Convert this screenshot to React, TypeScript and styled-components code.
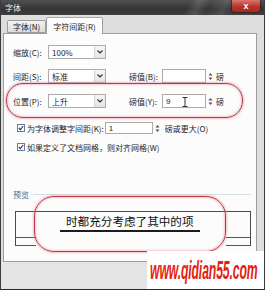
import React from "react";
import styled, { createGlobalStyle } from "styled-components";

const GlobalStyle = createGlobalStyle`
  html, body {
    margin: 0;
    padding: 0;
    background: #ffffff;
  }
`;

const CJK = `"Noto Sans CJK SC", "Noto Sans", sans-serif`;

function App() {
  return (
    <>
      <GlobalStyle />
      <Dialog.Window>
        <Dialog.TitleBar>
          <Dialog.Title>字体</Dialog.Title>
          <Dialog.Close>x</Dialog.Close>
        </Dialog.TitleBar>

        <Dialog.Frame>
          <Tabs.Strip>
            <Tabs.Tab>字体(N)</Tabs.Tab>
            <Tabs.Tab active>字符间距(R)</Tabs.Tab>
          </Tabs.Strip>

          <Dialog.Panel>
            <Form.Row>
              <Form.Label>缩放(C):</Form.Label>
              <Combo.Box>
                <Combo.Value>100%</Combo.Value>
                <Combo.Arrow>
                  <Chevron />
                </Combo.Arrow>
              </Combo.Box>
            </Form.Row>

            <Form.Row gap={10}>
              <Form.Label>间距(S):</Form.Label>
              <Combo.Box>
                <Combo.Value>标准</Combo.Value>
                <Combo.Arrow>
                  <Chevron />
                </Combo.Arrow>
              </Combo.Box>
              <Form.Label2>磅值(B):</Form.Label2>
              <Spin.Input width={44} />
              <Spin.Arrows>
                <SpinGlyph />
              </Spin.Arrows>
              <Form.Unit>磅</Form.Unit>
            </Form.Row>

            <Form.Row gap={11}>
              <Form.Label>位置(P):</Form.Label>
              <Combo.Box>
                <Combo.Value>上升</Combo.Value>
                <Combo.Arrow>
                  <Chevron />
                </Combo.Arrow>
              </Combo.Box>
              <Form.Label2>磅值(Y):</Form.Label2>
              <Spin.Input width={44}>
                9
                <Spin.Cursor>
                  <svg width="6" height="10" viewBox="0 0 6 10">
                    <path
                      d="M0.5 0.5h2.5M3 0.5h2.5M3 0.5v9M0.5 9.5h2.5M3 9.5h2.5"
                      stroke="#333"
                      strokeWidth="1"
                      fill="none"
                    />
                  </svg>
                </Spin.Cursor>
              </Spin.Input>
              <Spin.Arrows>
                <SpinGlyph />
              </Spin.Arrows>
              <Form.Unit>磅</Form.Unit>
            </Form.Row>

            <Form.CheckRow gap={14}>
              <Check.Box>
                <CheckMark />
              </Check.Box>
              <Check.Text>为字体调整字间距(K):</Check.Text>
              <Spin.Input width={48} small>
                1
              </Spin.Input>
              <Spin.Arrows>
                <SpinGlyph />
              </Spin.Arrows>
              <Form.Unit wide>磅或更大(O)</Form.Unit>
            </Form.CheckRow>

            <Form.CheckRow gap={7}>
              <Check.Box>
                <CheckMark />
              </Check.Box>
              <Check.Text>如果定义了文档网格，则对齐网格(W)</Check.Text>
            </Form.CheckRow>

            <Preview.Legend>
              <span>预览</span>
              <Preview.Rule />
            </Preview.Legend>

            <Preview.Box>
              <Preview.Text>时都充分考虑了其中的项</Preview.Text>
              <Preview.Line />
              <Preview.Line bottom />
            </Preview.Box>
          </Dialog.Panel>
        </Dialog.Frame>

        <Dialog.Footer />

        <Mark.Ring
          style={{ left: 5, top: 83, width: 237, height: 35, borderRadius: 17 }}
        />
        <Mark.Ring
          style={{ left: 33, top: 196, width: 192, height: 56, borderRadius: 20 }}
        />

        <Watermark.Box>
          <Watermark.Text>www.qidian55.com</Watermark.Text>
        </Watermark.Box>
      </Dialog.Window>
    </>
  );
}

function Chevron() {
  return (
    <svg width="6" height="4" viewBox="0 0 6 4">
      <path d="M0.5 0.5L3 3L5.5 0.5" stroke="#333" strokeWidth="1.2" fill="none" />
    </svg>
  );
}

function SpinGlyph() {
  return (
    <svg width="5" height="9" viewBox="0 0 5 9">
      <path d="M0.5 3.5L2.5 1L4.5 3.5Z M0.5 5.5L2.5 8L4.5 5.5Z" fill="#555" />
    </svg>
  );
}

function CheckMark() {
  return (
    <svg width="6" height="6" viewBox="0 0 6 6">
      <path d="M0.8 3L2.4 4.6L5.2 1" stroke="#2a3c5a" strokeWidth="1.1" fill="none" />
    </svg>
  );
}

const Dialog = {
  Window: styled.div`
    position: relative;
    width: 265px;
    height: 290px;
    box-sizing: border-box;
    display: flex;
    flex-direction: column;
    overflow: hidden;
    background: #e2e2e2;
    border-left: 1px solid #3c3c3c;
    border-right: 1px solid #3c3c3c;
    border-bottom: 1px solid #2a2a2a;
    font-family: ${CJK};
    font-size: 8px;
    color: #1e1e1e;
  `,
  TitleBar: styled.div`
    position: relative;
    height: 15px;
    flex: none;
    display: flex;
    align-items: center;
    padding-left: 4px;
    background:
      linear-gradient(115deg, transparent 70%, rgba(255, 255, 255, 0.12) 74%, transparent 78%, rgba(255, 255, 255, 0.1) 84%, transparent 88%),
      linear-gradient(to bottom, #505050, #343434 60%, #3e3e3e);
  `,
  Title: styled.span`
    color: #ececec;
    font-size: 8px;
    line-height: 1;
  `,
  Close: styled.div`
    position: absolute;
    top: 0;
    right: 4px;
    width: 28px;
    height: 12px;
    display: flex;
    align-items: center;
    justify-content: center;
    border-radius: 0 0 3px 3px;
    background: linear-gradient(to bottom, #d9766a, #b8332a 55%, #a52a22);
    box-shadow: 0 0 0 1px rgba(60, 20, 20, 0.6);
    color: #ffffff;
    font-family: "Liberation Sans", sans-serif;
    font-weight: bold;
    font-size: 9px;
    line-height: 1;
  `,
  Frame: styled.div`
    flex: none;
    padding: 2px 7px 0 2px;
    background: #dedede;
  `,
  Panel: styled.div`
    position: relative;
    height: 229px;
    box-sizing: border-box;
    padding: 11px 0 0 9px;
    border: 1px solid #9c9c9c;
    background: #fcfcfc;
  `,
  Footer: styled.div`
    flex: 1;
    background: #e4e4e4;
  `,
};

const Tabs = {
  Strip: styled.div`
    height: 16px;
    display: flex;
    align-items: flex-end;
    padding-left: 4px;
  `,
  Tab: styled.div<{ active?: boolean }>`
    position: relative;
    z-index: ${(p) => (p.active ? 2 : 1)};
    box-sizing: border-box;
    height: ${(p) => (p.active ? 17 : 13)}px;
    margin-bottom: ${(p) => (p.active ? -1 : 0)}px;
    padding: 0 ${(p) => (p.active ? 6 : 5)}px;
    display: flex;
    align-items: center;
    border: 1px solid #9c9c9c;
    border-bottom: ${(p) => (p.active ? "none" : "1px solid #9c9c9c")};
    border-top-color: ${(p) => (p.active ? "#e0a050" : "#9c9c9c")};
    border-radius: 2px 2px 0 0;
    background: ${(p) =>
      p.active ? "#fcfcfc" : "linear-gradient(to bottom, #f2f2f2, #dcdcdc)"};
    font-size: 8px;
    white-space: nowrap;
  `,
};

const Form = {
  Row: styled.div<{ gap?: number }>`
    height: 14px;
    margin-top: ${(p) => p.gap ?? 0}px;
    display: flex;
    align-items: center;
  `,
  CheckRow: styled.div<{ gap?: number }>`
    height: 12px;
    margin-top: ${(p) => p.gap ?? 0}px;
    padding-left: 4px;
    display: flex;
    align-items: center;
  `,
  Label: styled.span`
    width: 35px;
    flex: none;
    white-space: nowrap;
  `,
  Label2: styled.span`
    width: 33px;
    margin-left: 23px;
    flex: none;
    white-space: nowrap;
  `,
  Unit: styled.span<{ wide?: boolean }>`
    margin-left: ${(p) => (p.wide ? 5 : 3)}px;
    white-space: nowrap;
  `,
};

const Combo = {
  Box: styled.div`
    width: 58px;
    height: 14px;
    box-sizing: border-box;
    flex: none;
    display: flex;
    align-items: center;
    border: 1px solid #ababab;
    background: #ffffff;
  `,
  Value: styled.span`
    flex: 1;
    padding-left: 3px;
    font-size: 8px;
  `,
  Arrow: styled.span`
    width: 10px;
    height: 12px;
    display: flex;
    align-items: center;
    justify-content: center;
    border-left: 1px solid #d4d4d4;
    background: linear-gradient(to bottom, #f6f6f6, #e4e4e4);
  `,
};

const Spin = {
  Input: styled.div<{ width: number; small?: boolean }>`
    position: relative;
    width: ${(p) => p.width}px;
    height: ${(p) => (p.small ? 12 : 14)}px;
    box-sizing: border-box;
    flex: none;
    display: flex;
    align-items: center;
    padding-left: 3px;
    border: 1px solid #ababab;
    background: #ffffff;
    font-family: "Liberation Sans", sans-serif;
    font-size: 8px;
  `,
  Cursor: styled.span`
    position: absolute;
    left: 19px;
    top: 2px;
    display: flex;
  `,
  Arrows: styled.span`
    margin-left: 2px;
    display: flex;
    align-items: center;
  `,
};

const Check = {
  Box: styled.span`
    width: 8px;
    height: 8px;
    box-sizing: border-box;
    flex: none;
    display: flex;
    align-items: center;
    justify-content: center;
    border: 1px solid #6a7d95;
    background: #f6f8fb;
  `,
  Text: styled.span`
    margin-left: 2px;
    margin-right: 1px;
    white-space: nowrap;
  `,
};

const Preview = {
  Legend: styled.div`
    height: 10px;
    margin-top: 36px;
    display: flex;
    align-items: center;
    gap: 4px;
    color: #50698a;
  `,
  Rule: styled.div`
    flex: 1;
    height: 0;
    margin-right: 5px;
    border-top: 1px solid #d6dfe6;
  `,
  Box: styled.div`
    width: 236px;
    height: 35px;
    margin: 12px 0 0 2px;
    box-sizing: border-box;
    display: flex;
    flex-direction: column;
    align-items: flex-start;
    border: 1px solid #4a4a4a;
    border-bottom: none;
  `,
  Text: styled.div`
    margin: 2px 0 0 44px;
    padding: 0 6px 1px;
    border-bottom: 2px solid #1c1c1c;
    font-family: ${CJK};
    font-size: 11.6px;
    line-height: 15px;
    color: #111111;
    white-space: nowrap;
  `,
  Line: styled.div<{ bottom?: boolean }>`
    width: 100%;
    height: 1px;
    margin-top: ${(p) => (p.bottom ? "7px" : "auto")};
    background: linear-gradient(
      to right,
      #555 20px,
      transparent 20px,
      transparent 210px,
      #555 210px
    );
  `,
};

const Mark = {
  Ring: styled.div`
    position: absolute;
    box-sizing: border-box;
    border: 1.5px solid #b63a48;
    box-shadow: 0 0 2px 1px rgba(230, 140, 150, 0.55),
      inset 0 0 2px 1px rgba(230, 140, 150, 0.45);
    pointer-events: none;
  `,
};

const Watermark = {
  Box: styled.div`
    position: absolute;
    right: 0;
    bottom: 0;
    width: 117px;
    height: 38px;
    background: #ffffff;
    overflow: hidden;
  `,
  Text: styled.div`
    position: absolute;
    left: 3px;
    top: 5px;
    transform: scaleX(0.49);
    transform-origin: left top;
    font-family: "Liberation Sans", Arial, sans-serif;
    font-weight: bold;
    font-style: italic;
    font-size: 25px;
    line-height: 28px;
    color: #e51f12;
    white-space: nowrap;
    letter-spacing: -0.3px;
  `,
};

export default App;
